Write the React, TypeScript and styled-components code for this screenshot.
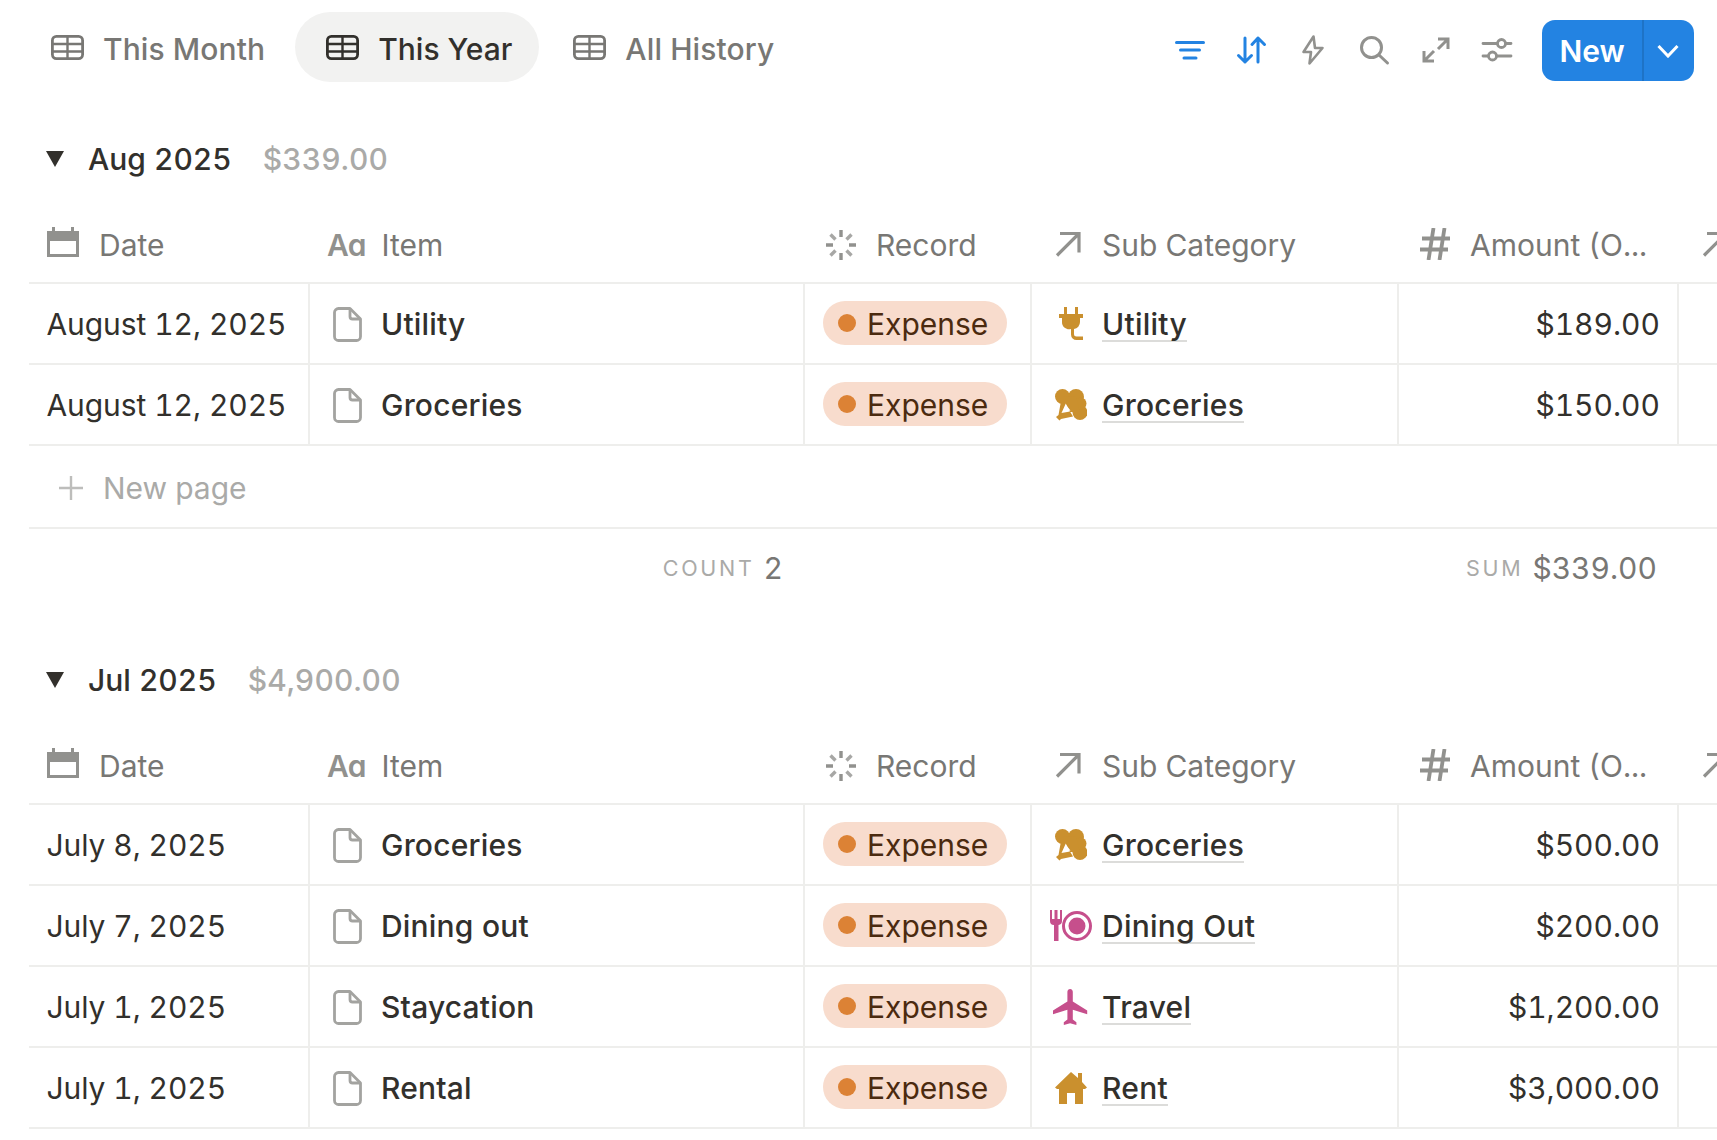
import React from 'react';
import styled, { createGlobalStyle } from 'styled-components';

const GlobalStyle = createGlobalStyle`
  html, body {
    margin: 0;
    padding: 0;
    background: #fff;
    overflow: hidden;
  }
  body {
    width: 1717px;
    height: 1140px;
    font-family: Inter, "Liberation Sans", sans-serif;
    font-size: 30px;
    font-feature-settings: "tnum";
    color: #32302c;
  }
`;

const COLUMNS = '281px 495px 227px 367px 280px 100px';
const LINE = '#eeeeec';
const GRAY = '#91918e';

// --- Toolbar ---
const Page = styled.div`
  width: 1717px;
  height: 1140px;
  overflow: hidden;
`;

const Toolbar = styled.div`
  height: 124px;
  box-sizing: border-box;
  padding: 12px 23px 0 20px;
  display: flex;
  align-items: flex-start;
  justify-content: space-between;
`;

const Tabs = styled.div`
  display: flex;
  gap: 3px;
`;

const Tab = styled.div<{ $active?: boolean }>`
  height: 70px;
  padding: 0 27px 0 31px;
  border-radius: 35px;
  display: flex;
  align-items: center;
  gap: 19px;
  font-weight: 500;
  font-feature-settings: normal;
  letter-spacing: ${p => (p.$active ? '0' : '0.1px')};
  background: ${p => (p.$active ? '#f2f2f1' : 'transparent')};
  color: ${p => (p.$active ? '#32302c' : '#787774')};
`;

const TabLabel = styled.span`
  margin-top: 3px;
`;

const Actions = styled.div`
  display: flex;
  align-items: flex-start;
`;

const IconButton = styled.div<{ $blue?: boolean }>`
  width: 61.5px;
  height: 76px;
  display: flex;
  align-items: center;
  justify-content: center;
  color: ${p => (p.$blue ? '#2383e2' : GRAY)};
`;

const NewButton = styled.div`
  width: 152px;
  height: 61px;
  margin: 8px 0 0 14px;
  border-radius: 13px;
  background: #2383e2;
  color: #fff;
  display: flex;
  font-weight: 600;
`;

const NewLabel = styled.div`
  width: 100px;
  display: flex;
  align-items: center;
  justify-content: center;
  border-right: 2px solid rgba(0, 0, 0, 0.12);
`;

const NewArrow = styled.div`
  flex: 1;
  display: flex;
  align-items: center;
  justify-content: center;
  padding-right: 2px;
`;

// --- Group ---
const Group = styled.section`
  margin-bottom: 38px;
`;

const GroupHeader = styled.div`
  height: 70px;
  padding-left: 46px;
  display: flex;
  align-items: center;
  font-weight: 500;
`;

const Triangle = styled.div`
  width: 0;
  height: 0;
  border-left: 9.5px solid transparent;
  border-right: 9.5px solid transparent;
  border-top: 16px solid #32302c;
  margin-right: 24px;
`;

const GroupAmount = styled.span`
  margin-left: 31px;
  color: #aaaaa8;
  letter-spacing: 0.1px;
`;

const Table = styled.div`
  margin-left: 29px;
  width: 1750px;
`;

const HeadRow = styled.div`
  height: 90px;
  box-sizing: border-box;
  padding-top: 14px;
  display: grid;
  grid-template-columns: ${COLUMNS};
  border-bottom: 2px solid ${LINE};
`;

const HeadCell = styled.div<{ $left: number; $gap: number }>`
  display: flex;
  align-items: center;
  gap: ${p => p.$gap}px;
  padding-left: ${p => p.$left}px;
  min-width: 0;
  white-space: nowrap;
  color: #787774;
`;

const HeadIcon = styled.span<{ $lift: number }>`
  display: flex;
  margin-bottom: ${p => p.$lift}px;
`;

const HeadGlyph = styled.span`
  color: ${GRAY};
  font-weight: 600;
  font-size: 30px;
  letter-spacing: -1px;
  line-height: 1;
`;

const Row = styled.div`
  height: 81px;
  box-sizing: border-box;
  display: grid;
  grid-template-columns: ${COLUMNS};
  border-bottom: 2px solid ${LINE};
`;

const Cell = styled.div`
  display: flex;
  align-items: center;
  box-sizing: border-box;
  border-right: 2px solid ${LINE};
  min-width: 0;
  white-space: nowrap;
`;

const DateCell = styled(Cell)`
  padding-left: 17.5px;
  letter-spacing: -0.08px;
`;

const ItemCell = styled(Cell)`
  padding-left: 23px;
  gap: 19px;
  font-weight: 500;
  letter-spacing: 0.2px;
`;

const FileBox = styled.span`
  display: flex;
  padding-top: 2px;
`;

const RecordCell = styled(Cell)`
  padding-left: 18px;
`;

const CategoryCell = styled(Cell)`
  padding-left: 16px;
  gap: 8px;
  font-weight: 500;
  letter-spacing: 0.25px;
`;

const AmountCell = styled(Cell)`
  justify-content: flex-end;
  padding-right: 17px;
`;

const Badge = styled.div`
  width: 184px;
  height: 44px;
  box-sizing: border-box;
  margin-top: -2px;
  padding: 2px 0 0 15px;
  border-radius: 22px;
  background: #f8dccd;
  color: #4b2a0f;
  display: flex;
  align-items: center;
  gap: 11px;
`;

const Dot = styled.span`
  width: 18px;
  height: 18px;
  border-radius: 50%;
  background: #dc8235;
  margin-top: -2px;
`;

const IconBox = styled.span`
  width: 46px;
  display: flex;
  justify-content: center;
`;

const CategoryLink = styled.span`
  padding-top: 2px;
  line-height: 32px;
  border-bottom: 2px solid #dcdcda;
`;

const NewPageRow = styled.div`
  height: 83px;
  box-sizing: border-box;
  padding: 2px 0 0 30px;
  display: flex;
  align-items: center;
  gap: 20px;
  color: #aaaaa8;
  border-bottom: 2px solid ${LINE};
`;

const Footer = styled.div`
  height: 78px;
  display: grid;
  grid-template-columns: ${COLUMNS};
  color: #787774;
`;

const FooterCell = styled.div<{ $col: number; $right: number }>`
  grid-column: ${p => p.$col};
  display: flex;
  align-items: center;
  justify-content: flex-end;
  gap: 9px;
  padding-right: ${p => p.$right}px;
`;

const FooterLabel = styled.span`
  font-size: 21.5px;
  letter-spacing: 2.7px;
  color: #aaaaa8;
`;

// --- Icons ---
const TableIcon = () => (
  <svg width="33" height="25" viewBox="0 0 33 25" fill="none" stroke="currentColor" strokeWidth="2.8">
    <rect x="1.4" y="1.4" width="30.2" height="22.2" rx="4" />
    <path d="M1 9h31M1 16.5h31M16.5 1v23" strokeWidth="2.4" />
  </svg>
);

const FilterIcon = () => (
  <svg width="32" height="32" viewBox="0 0 32 32" fill="none" stroke="currentColor" strokeWidth="3" strokeLinecap="round">
    <path d="M2.5 8.5h27M6.5 16h19M10 24h12" />
  </svg>
);

const SortIcon = () => (
  <svg width="32" height="32" viewBox="0 0 32 32" fill="none" stroke="currentColor" strokeWidth="3" strokeLinecap="round" strokeLinejoin="round">
    <path d="M10 4v24M3.5 21.5L10 28l6.5-6.5M23 28V4M17 10.5L23 4l6.5 6.5" />
  </svg>
);

const BoltIcon = () => (
  <svg width="32" height="32" viewBox="0 0 32 32" fill="none" stroke="currentColor" strokeWidth="2.6" strokeLinejoin="round">
    <path d="M16.5 2.5L6.500 18h7.500l-1.500 11.500L25.500 14H18z" />
  </svg>
);

const SearchIcon = () => (
  <svg width="32" height="32" viewBox="0 0 32 32" fill="none" stroke="currentColor" strokeWidth="3" strokeLinecap="round">
    <circle cx="13.5" cy="13.5" r="10" />
    <path d="M21 21l8.500 8" />
  </svg>
);

const ExpandIcon = () => (
  <svg width="32" height="32" viewBox="0 0 32 32" fill="none" stroke="currentColor" strokeWidth="3">
    <path d="M18 5h10v10M28 5L18 15M14 17L4 27M4 17v10h10" />
  </svg>
);

const SlidersIcon = () => (
  <svg width="32" height="32" viewBox="0 0 32 32" fill="none" stroke="currentColor" strokeWidth="2.8" strokeLinecap="round">
    <path d="M2 9.5h14M25 9.5h5M2 22h5M16 22h14" />
    <circle cx="20.5" cy="9.5" r="4" />
    <circle cx="11.5" cy="22" r="4" />
  </svg>
);

const Chevron = () => (
  <svg width="22" height="14" viewBox="0 0 22 14" fill="none" stroke="currentColor" strokeWidth="3">
    <path d="M1.5 2L11 12 20.500 2" />
  </svg>
);

const CalendarIcon = () => (
  <svg width="32" height="30" viewBox="0 0 32 30" fill={GRAY}>
    <path fillRule="evenodd" d="M0 4h5V0h3v4h16V0h3v4h5v26H0zM3 14v13h26V14z" />
  </svg>
);

const SpinnerIcon = () => (
  <svg width="32" height="32" viewBox="0 0 32 32" fill="none" stroke={GRAY} strokeWidth="3.4">
    <path d="M16 1v7M16 24v7M1 16h7M24 16h7" />
    <path d="M5.5 5.5l5 5M21.5 21.5l5 5M26.5 5.5l-5 5M10.5 21.5l-5 5" opacity="0.8" />
  </svg>
);

const ArrowIcon = () => (
  <svg width="26" height="26" viewBox="0 0 26 26" fill="none" stroke={GRAY} strokeWidth="3.2">
    <path d="M5 2.5h19v19M24 2.5L2 24.5" />
  </svg>
);

const HashIcon = () => (
  <svg width="30" height="32" viewBox="0 0 30 32" fill="none" stroke={GRAY} strokeWidth="3.8">
    <path d="M2 10.5h28M0 21.5h28M13.5 0L8.5 32M24.5 0l-5 32" />
  </svg>
);

const FileIcon = () => (
  <svg width="29" height="35" viewBox="0 0 29 35" fill="none" stroke="#a3a3a0" strokeWidth="2.8" strokeLinejoin="round">
    <path d="M5.5 1.5H17l10.5 10.5v17.5a4 4 0 0 1-4 4h-18a4 4 0 0 1-4-4v-24a4 4 0 0 1 4-4z" />
    <path d="M17 1.5v8a2.5 2.5 0 0 0 2.5 2.5h8" />
  </svg>
);

const PlusIcon = () => (
  <svg width="24" height="24" viewBox="0 0 24 24" fill="none" stroke="#bdbdbb" strokeWidth="2.4">
    <path d="M12 0v24M0 12h24" />
  </svg>
);

const AMBER = '#ca902e';
const PINK = '#c64f8c';

const PlugIcon = () => (
  <svg width="24" height="34" viewBox="0 0 24 34" fill={AMBER}>
    <path d="M5 0h3v7h8V0h3v7h5v4h-3v4a7 7 0 0 1-6 7v5a2.5 2.5 0 0 0 2.5 2.5H24V33h-6.5A5.5 5.5 0 0 1 12 27.5V22a7 7 0 0 1-9-7v-4H0V7h5z" />
  </svg>
);

const BroccoliIcon = () => (
  <svg width="32" height="32" viewBox="0 0 32 32" fill={AMBER}>
    <circle cx="7.5" cy="7.5" r="7.5" />
    <circle cx="21" cy="8" r="8" />
    <circle cx="25" cy="23.5" r="7.5" />
    <circle cx="25.5" cy="14.5" r="6" />
    <path d="M7 7L21 8 25 23 15 23z" />
    <path d="M6 12l5 2-4.5 10L15 22.5l3 5L6 30l-1.5 1.5L1 28l2.5-2z" />
    <path d="M8.5 22.5L11 16l4.5 5.5z" fill="#fff" />
  </svg>
);

const DiningIcon = () => (
  <svg width="42" height="32" viewBox="0 0 42 32" fill={PINK}>
    <path d="M0 0h2v9h2.5V0h3v9H10V0h2v11a4 4 0 0 1-3.5 4v16H4V15a4 4 0 0 1-4-4z" />
    <path fillRule="evenodd" d="M27 1a15 15 0 1 1 0 30 15 15 0 0 1 0-30zm0 3a12 12 0 1 0 0 24 12 12 0 0 0 0-24z" />
    <circle cx="27" cy="16" r="8.5" />
  </svg>
);

const PlaneIcon = () => (
  <svg width="36" height="36" viewBox="2 2 20 20" fill={PINK}>
    <path d="M21 16v-2l-8-5V3.5c0-.83-.67-1.5-1.5-1.5S10 2.67 10 3.5V9l-8 5v2l8-2.5V19l-2 1.5V22l3.5-1 3.5 1v-1.5L13 19v-5.5l8 2.5z" />
  </svg>
);

const HouseIcon = () => (
  <svg width="32" height="32" viewBox="0 0 32 32" fill={AMBER}>
    <path d="M16 0l7 6V1h4v9l5 5.5-2 1.5H28v15h-8V21h-8v11H4V17H2l-2-1.5z" />
  </svg>
);

// --- Data ---
type Entry = {
  date: string;
  item: string;
  category: string;
  icon: React.ReactNode;
  amount: string;
};

const augEntries: Entry[] = [
  { date: 'August 12, 2025', item: 'Utility', category: 'Utility', icon: <PlugIcon />, amount: '$189.00' },
  { date: 'August 12, 2025', item: 'Groceries', category: 'Groceries', icon: <BroccoliIcon />, amount: '$150.00' },
];

const julEntries: Entry[] = [
  { date: 'July 8, 2025', item: 'Groceries', category: 'Groceries', icon: <BroccoliIcon />, amount: '$500.00' },
  { date: 'July 7, 2025', item: 'Dining out', category: 'Dining Out', icon: <DiningIcon />, amount: '$200.00' },
  { date: 'July 1, 2025', item: 'Staycation', category: 'Travel', icon: <PlaneIcon />, amount: '$1,200.00' },
  { date: 'July 1, 2025', item: 'Rental', category: 'Rent', icon: <HouseIcon />, amount: '$3,000.00' },
];

const TableHead: React.FC = () => (
  <HeadRow>
    <HeadCell $left={18} $gap={20}><HeadIcon $lift={7}><CalendarIcon /></HeadIcon>Date</HeadCell>
    <HeadCell $left={17} $gap={16}><HeadGlyph>Aɑ</HeadGlyph>Item</HeadCell>
    <HeadCell $left={20} $gap={19}><SpinnerIcon />Record</HeadCell>
    <HeadCell $left={23} $gap={21}><HeadIcon $lift={2}><ArrowIcon /></HeadIcon>Sub Category</HeadCell>
    <HeadCell $left={21} $gap={20}><HeadIcon $lift={3}><HashIcon /></HeadIcon>Amount (O...</HeadCell>
    <HeadCell $left={23} $gap={0}><HeadIcon $lift={2}><ArrowIcon /></HeadIcon></HeadCell>
  </HeadRow>
);

const EntryRow: React.FC<{ entry: Entry }> = ({ entry }) => (
  <Row>
    <DateCell>{entry.date}</DateCell>
    <ItemCell><FileBox><FileIcon /></FileBox>{entry.item}</ItemCell>
    <RecordCell><Badge><Dot />Expense</Badge></RecordCell>
    <CategoryCell>
      <IconBox>{entry.icon}</IconBox>
      <CategoryLink>{entry.category}</CategoryLink>
    </CategoryCell>
    <AmountCell>{entry.amount}</AmountCell>
    <div />
  </Row>
);

const MonthGroup: React.FC<{ title: string; total: string; count: number; entries: Entry[]; showFooter?: boolean }> = ({ title, total, count, entries, showFooter }) => (
  <Group>
    <GroupHeader>
      <Triangle />
      {title}
      <GroupAmount>{total}</GroupAmount>
    </GroupHeader>
    <Table>
      <TableHead />
      {entries.map((entry, i) => <EntryRow key={i} entry={entry} />)}
      {showFooter && (
        <>
          <NewPageRow><PlusIcon />New page</NewPageRow>
          <Footer>
            <FooterCell $col={2} $right={22}><FooterLabel>COUNT</FooterLabel>{count}</FooterCell>
            <FooterCell $col={5} $right={22}><FooterLabel>SUM</FooterLabel>{total}</FooterCell>
          </Footer>
        </>
      )}
    </Table>
  </Group>
);

const App: React.FC = () => (
  <Page>
    <GlobalStyle />
    <Toolbar>
      <Tabs>
        <Tab><TableIcon /><TabLabel>This Month</TabLabel></Tab>
        <Tab $active><TableIcon /><TabLabel>This Year</TabLabel></Tab>
        <Tab><TableIcon /><TabLabel>All History</TabLabel></Tab>
      </Tabs>
      <Actions>
        <IconButton $blue><FilterIcon /></IconButton>
        <IconButton $blue><SortIcon /></IconButton>
        <IconButton><BoltIcon /></IconButton>
        <IconButton><SearchIcon /></IconButton>
        <IconButton><ExpandIcon /></IconButton>
        <IconButton><SlidersIcon /></IconButton>
        <NewButton>
          <NewLabel>New</NewLabel>
          <NewArrow><Chevron /></NewArrow>
        </NewButton>
      </Actions>
    </Toolbar>
    <MonthGroup title="Aug 2025" total="$339.00" count={2} entries={augEntries} showFooter />
    <MonthGroup title="Jul 2025" total="$4,900.00" count={4} entries={julEntries} />
  </Page>
);

export default App;
